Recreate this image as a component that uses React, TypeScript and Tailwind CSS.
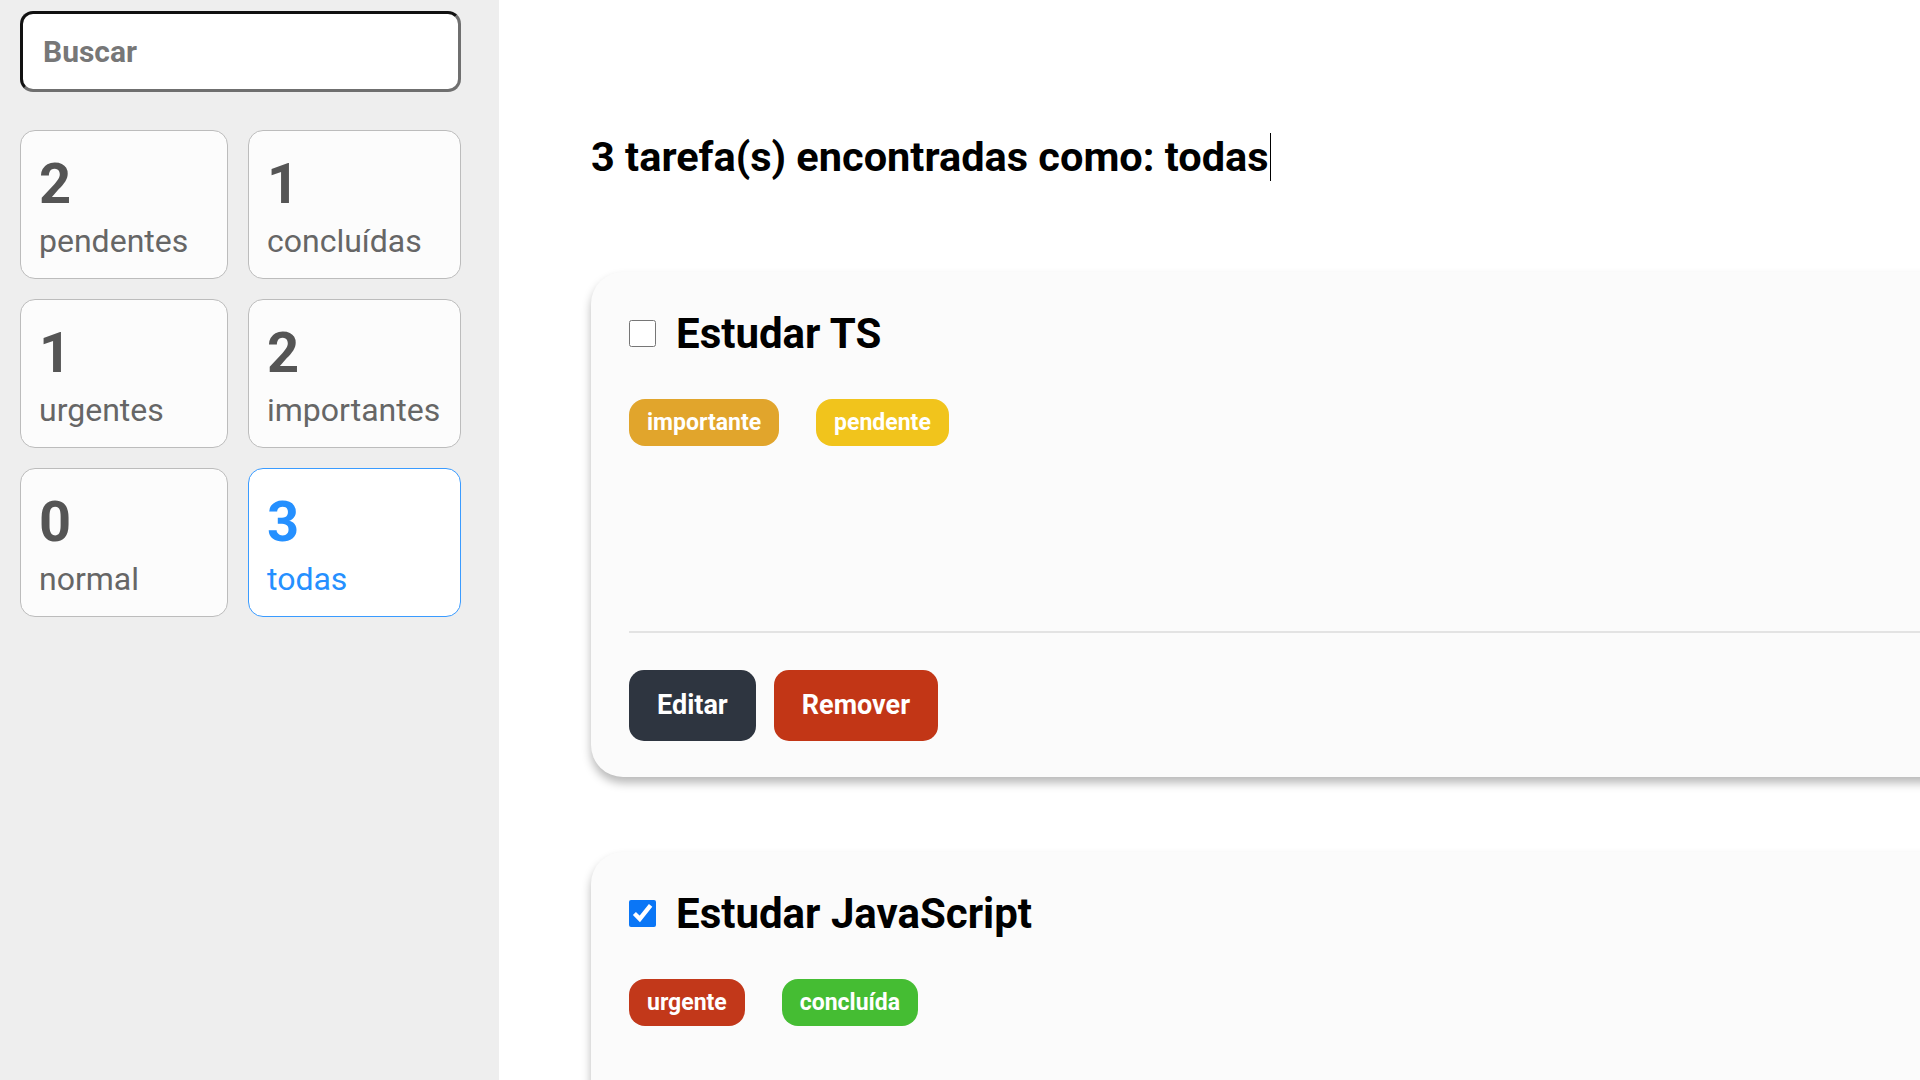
import React from 'react';

type Task = {
  id: number;
  title: string;
  done: boolean;
  priority: 'urgente' | 'importante' | 'normal';
};

const tasks: Task[] = [
  { id: 1, title: 'Estudar TS', done: false, priority: 'importante' },
  { id: 2, title: 'Estudar JavaScript', done: true, priority: 'urgente' },
];

const priorityColor: Record<Task['priority'], string> = {
  urgente: 'bg-[#c2381a]',
  importante: 'bg-[#e1a52c]',
  normal: 'bg-[#7f8fa6]',
};

const filters = [
  { count: 2, label: 'pendentes' },
  { count: 1, label: 'concluídas' },
  { count: 1, label: 'urgentes' },
  { count: 2, label: 'importantes' },
  { count: 0, label: 'normal' },
  { count: 3, label: 'todas', active: true },
];

const FilterCard: React.FC<{ count: number; label: string; active?: boolean }> = ({ count, label, active }) => (
  <div
    className={
      active
        ? 'h-[149px] rounded-[15px] border-[1.5px] border-[#3a9bff] bg-white px-[18px] pt-5 text-[#2590ff]'
        : 'h-[149px] rounded-[15px] border-[1.5px] border-[#bcbcbc] bg-[#fcfcfc] px-[18px] pt-5 text-[#555]'
    }
  >
    <div className="text-[56px] font-bold leading-[normal]">{count}</div>
    <div className={active ? 'mt-[5px] text-[32px] leading-[normal]' : 'mt-[5px] text-[32px] leading-[normal] text-[#666]'}>
      {label}
    </div>
  </div>
);

const Badge: React.FC<{ className: string; children: React.ReactNode }> = ({ className, children }) => (
  <span className={`inline-block rounded-[16px] px-[18px] py-[10px] text-[23px] font-bold leading-[normal] text-white ${className}`}>
    {children}
  </span>
);

const TaskCard: React.FC<{ task: Task }> = ({ task }) => (
  <div className="w-[1420px] shrink-0 rounded-[32px] bg-[#fbfbfb] px-[38px] pt-[37px] pb-[36px] shadow-[0_6px_10px_rgba(0,0,0,0.28)]">
    <div className="flex items-center gap-[20px]">
      <input
        type="checkbox"
        defaultChecked={task.done}
        className="h-[27px] w-[27px] accent-[#0a76f6]"
      />
      <h2 className="text-[42px] font-bold leading-[normal] text-black">{task.title}</h2>
    </div>
    <div className="mt-[41px] flex gap-[37px]">
      <Badge className={priorityColor[task.priority]}>{task.priority}</Badge>
      <Badge className={task.done ? 'bg-[#45bd33]' : 'bg-[#f1c41c]'}>{task.done ? 'concluída' : 'pendente'}</Badge>
    </div>
    <div className="mt-[185px] h-[2px] bg-[#e3e3e3]" />
    <div className="mt-[37px] flex gap-[18px]">
      <button className="h-[71px] rounded-[15px] bg-[#2e3540] px-[28px] text-[27px] font-bold text-white">Editar</button>
      <button className="h-[71px] rounded-[15px] bg-[#c23616] px-[28px] text-[27px] font-bold text-white">Remover</button>
    </div>
  </div>
);

export default function App() {
  return (
    <div className="flex h-screen w-screen overflow-hidden bg-white font-['Roboto','Liberation_Sans',sans-serif]">
      <aside className="w-[499px] shrink-0 bg-[#eeeeee] px-5 pt-[11px]">
        <input
          placeholder="Buscar"
          className="h-[81px] w-[441px] rounded-[13px] border-[3px] border-t-[#111] border-l-[#111] border-r-[#6f6f6f] border-b-[#6f6f6f] bg-white px-[20px] text-[30px] font-bold outline-none placeholder:text-[#777]"
        />
        <div className="mt-[38px] grid grid-cols-[208px_213px] gap-x-5 gap-y-5">
          {filters.map((f) => (
            <FilterCard key={f.label} {...f} />
          ))}
        </div>
      </aside>
      <main className="flex min-w-0 flex-1 flex-col pl-[92px] pt-[132px]">
        <h1 className="flex items-center text-[41.5px] font-bold leading-[normal] text-black">
          3 tarefa(s) encontradas como: todas
          <span className="ml-[1px] inline-block h-[48px] w-[1.5px] bg-black" />
        </h1>
        <div className="mt-[91px] flex flex-col gap-[75px]">
          {tasks.map((t) => (
            <TaskCard key={t.id} task={t} />
          ))}
        </div>
      </main>
    </div>
  );
}
